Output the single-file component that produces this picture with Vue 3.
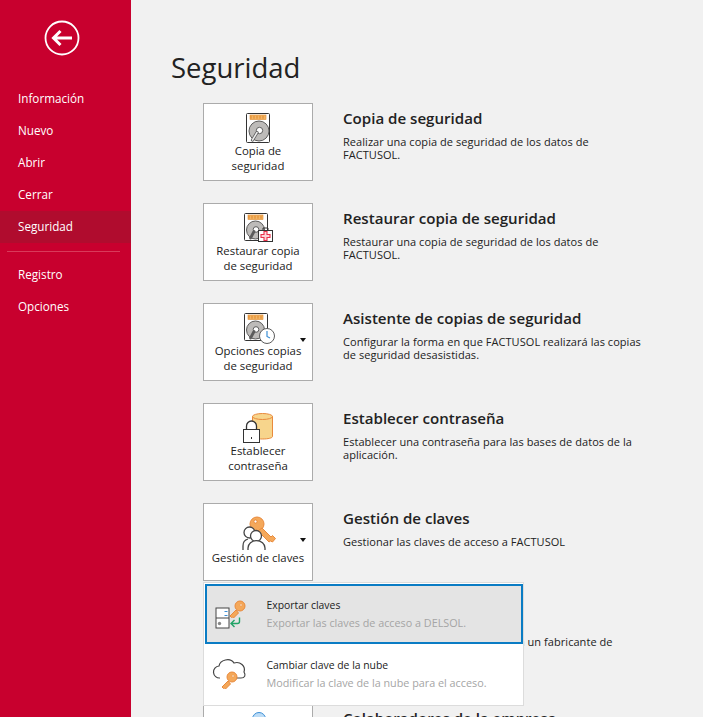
<template>
  <div class="page">
    <nav class="sidebar">
      <button class="back">
        <svg width="36" height="36" viewBox="0 0 36 36">
          <circle cx="18" cy="18" r="16.500" fill="none" stroke="#fff" stroke-width="1.800" />
          <path d="M9.500 18H28M16.500 11 9.500 18l7 7" fill="none" stroke="#fff" stroke-width="3" />
        </svg>
      </button>
      <a v-for="item in navTop" :key="item" class="nav-item" :class="{ active: item === 'Seguridad' }">{{ item }}</a>
      <div class="nav-sep"></div>
      <a v-for="item in navBottom" :key="item" class="nav-item">{{ item }}</a>
    </nav>

    <main class="content">
      <h1>Seguridad</h1>
      <section v-for="row in rows" :key="row.title" class="row">
        <div class="tile">
          <svg class="tile-icon" width="48" height="36" viewBox="0 0 48 36">
            <g v-if="row.icon === 'disk'">
              <rect x="12.500" y="2.500" width="23" height="29" rx="1" fill="#fff" stroke="#333" />
              <rect x="16" y="4" width="16" height="4.500" fill="#f4b565" stroke="#e08a2e" stroke-width=".6" />
              <path d="M16.500 6.200h15" stroke="#e08a2e" stroke-width="3" stroke-dasharray="1 2" />
              <circle cx="25" cy="20" r="10" fill="#bdbbb9" stroke="#5c5c5c" />
              <circle cx="25.500" cy="19.500" r="3.200" fill="#fff" stroke="#5c5c5c" />
              <path d="M23 21.500 18.500 29" stroke="#5c5c5c" stroke-width="3.200" stroke-linecap="round" />
              <path d="M23 21.500 18.500 29" stroke="#eee" stroke-width="1.500" stroke-linecap="round" />
            </g>
            <g v-else-if="row.icon === 'restore'">
              <rect x="10.500" y="2.500" width="23" height="27" rx="1" fill="#fff" stroke="#333" />
              <rect x="14" y="4" width="15" height="4.500" fill="#f4b565" stroke="#e08a2e" stroke-width=".6" />
              <path d="M14.500 6.200h14" stroke="#e08a2e" stroke-width="3" stroke-dasharray="1 2" />
              <circle cx="21.500" cy="19" r="9" fill="#bdbbb9" stroke="#5c5c5c" />
              <circle cx="22" cy="18.500" r="2.800" fill="#fff" stroke="#5c5c5c" />
              <path d="M20 20.500 16.500 27" stroke="#5c5c5c" stroke-width="2.800" stroke-linecap="round" />
              <path d="M29 19v-2h5v2" fill="none" stroke="#333" />
              <rect x="24.500" y="19.500" width="14" height="11" fill="#fff" stroke="#333" />
              <path d="M30 20.500h3v3h3v3h-3v3h-3v-3h-3v-3h3z" fill="#fbd3d8" stroke="#e9304a" stroke-width="1.100" />
            </g>
            <g v-else-if="row.icon === 'clock'">
              <rect x="10.500" y="2.500" width="23" height="27" rx="1" fill="#fff" stroke="#333" />
              <rect x="14" y="4" width="15" height="4.500" fill="#f4b565" stroke="#e08a2e" stroke-width=".6" />
              <path d="M14.500 6.200h14" stroke="#e08a2e" stroke-width="3" stroke-dasharray="1 2" />
              <circle cx="21.500" cy="19" r="9" fill="#bdbbb9" stroke="#5c5c5c" />
              <circle cx="22" cy="18.500" r="2.800" fill="#fff" stroke="#5c5c5c" />
              <path d="M20 20.500 16.500 27" stroke="#5c5c5c" stroke-width="2.800" stroke-linecap="round" />
              <circle cx="33" cy="25" r="7.500" fill="#fff" stroke="#5c5c5c" />
              <path d="M33 20v5.500l3 1.500" fill="none" stroke="#3c8fd6" stroke-width="1.200" />
            </g>
            <g v-else-if="row.icon === 'lock'">
              <path d="M18.500 5.500v20c0 1.500 4.500 2.500 10 2.500s10-1 10-2.500v-20z" fill="#f7d58c" stroke="#e98a3c" />
              <ellipse cx="28.500" cy="5.500" rx="10" ry="3" fill="#f7d58c" stroke="#e98a3c" />
              <path d="M12.500 18.500v-3.500a5 5 0 0 1 10 0v3.500" fill="#fff" stroke="#333" stroke-width="1.300" />
              <rect x="9.500" y="18.500" width="16" height="13" fill="#fff" stroke="#333" />
              <rect x="17" y="26" width="1" height="2" fill="#333" />
            </g>
            <g v-else-if="row.icon === 'keys'">
              <circle cx="23" cy="13" r="7" fill="#f4a85a" stroke="#e98a3c" />
              <circle cx="21.500" cy="10.500" r="1.600" fill="#fff" stroke="#e98a3c" />
              <path d="m28 17 9 9 1.500-1.500 3 3-3 3.500-2-1-1.500 1-11-11z" fill="#f4a85a" stroke="#e98a3c" />
              <circle cx="15.500" cy="21.500" r="5.500" fill="#fff" stroke="#444" stroke-width="1.300" />
              <path d="M9 39v-4a7 7 0 0 1 5-7" fill="none" stroke="#444" stroke-width="1.300" />
              <circle cx="22" cy="25" r="5.500" fill="#fff" stroke="#444" stroke-width="1.300" />
              <path d="M14 39v-2a8 7 0 0 1 17 0v2" fill="#fff" stroke="#444" stroke-width="1.300" />
            </g>
            <g v-else-if="row.icon === 'people'">
              <circle cx="25" cy="8" r="6.500" fill="#bcdcf6" stroke="#3c8fd6" />
            </g>
          </svg>
          <span class="tile-label" :class="{ single: row.icon === 'keys' }">{{ row.label }}</span>
          <span v-if="row.caret" class="caret"></span>
          <div v-if="row.menu" class="menu">
            <div v-for="entry in menuItems" :key="entry.title" class="menu-item" :class="{ selected: entry.selected }">
              <svg class="menu-icon" width="40" height="40" viewBox="0 0 40 40">
                <g v-if="entry.selected">
                  <g transform="translate(1.500 5.500)">
                    <rect x="1.500" y="8.500" width="13" height="20" fill="#fff" stroke="#444" />
                    <path d="M1.500 18.500h13" stroke="#444" />
                    <path d="M10 12h3M10 16h3" stroke="#3c8fd6" />
                    <circle cx="5" cy="24" r="1.700" fill="#888" />
                  </g>
                  <g transform="translate(0 6)">
                    <circle cx="27" cy="6" r="5" fill="#f4a85a" stroke="#e98a3c" />
                    <circle cx="28" cy="5" r="1" fill="#fff" stroke="#e98a3c" stroke-width=".5" />
                    <path d="m23 10-6 6 1.500 1.500 1-.5 1 1 5-5z" fill="#f4a85a" stroke="#e98a3c" />
                    <path d="M26.500 17.500v4a2 2 0 0 1-2 2h-6M21.500 20l-3.500 3.500 3.500 3.500" fill="none" stroke="#21a366" stroke-width="1.400" />
                  </g>
                </g>
                <g v-else>
                  <path transform="translate(0 -5)" d="M7 29a6 6 0 0 1-1-12c1-6 11-9 15-3 6-2 12 3 10 9 2 3 1 6-3 6h-8" fill="#fff" stroke="#444" stroke-width="1.200" />
                  <g transform="translate(-3 -6)">
                    <circle cx="22" cy="29" r="5" fill="#f4a85a" stroke="#e98a3c" />
                    <circle cx="23" cy="28" r="1" fill="#fff" stroke="#e98a3c" stroke-width=".5" />
                    <path d="m18 33-6 6 1.500 1.500 1-.5 1 1 5-5z" fill="#f4a85a" stroke="#e98a3c" />
                  </g>
                </g>
              </svg>
              <div class="menu-text">
                <div class="menu-title">{{ entry.title }}</div>
                <div class="menu-desc">{{ entry.desc }}</div>
              </div>
            </div>
          </div>
        </div>
        <div class="info">
          <h2>{{ row.title }}</h2>
          <p>{{ row.desc }}</p>
        </div>
      </section>
    </main>
  </div>
</template>

<script setup>
const navTop = ['Información', 'Nuevo', 'Abrir', 'Cerrar', 'Seguridad']
const navBottom = ['Registro', 'Opciones']

const rows = [
  { icon: 'disk', label: 'Copia de seguridad', title: 'Copia de seguridad', desc: 'Realizar una copia de seguridad de los datos de FACTUSOL.' },
  { icon: 'restore', label: 'Restaurar copia de seguridad', title: 'Restaurar copia de seguridad', desc: 'Restaurar una copia de seguridad de los datos de FACTUSOL.' },
  { icon: 'clock', label: 'Opciones copias de seguridad', title: 'Asistente de copias de seguridad', desc: 'Configurar la forma en que FACTUSOL realizará las copias de seguridad desasistidas.', caret: true },
  { icon: 'lock', label: 'Establecer contraseña', title: 'Establecer contraseña', desc: 'Establecer una contraseña para las bases de datos de la aplicación.' },
  { icon: 'keys', label: 'Gestión de claves', title: 'Gestión de claves', desc: 'Gestionar las claves de acceso a FACTUSOL', caret: true, menu: true },
  { icon: 'none', label: 'Fabricantes', title: 'Acceso de fabricantes', desc: 'Conceder el acceso de FACTUSOL a un fabricante de software.' },
  { icon: 'people', label: 'Colaboradores', title: 'Colaboradores de la empresa', desc: '' }
]

const menuItems = [
  { title: 'Exportar claves', desc: 'Exportar las claves de acceso a DELSOL.', selected: true },
  { title: 'Cambiar clave de la nube', desc: 'Modificar la clave de la nube para el acceso.' }
]
</script>

<style>
html, body {
  margin: 0;
  overflow: hidden;
}
</style>

<style scoped>
.page {
  display: flex;
  height: 717px;
  overflow: hidden;
  font-family: "Open Sans", "Noto Sans", sans-serif;
  color: #1a1a1a;
  background: #f1f1f1;
}

.sidebar {
  flex: 0 0 131px;
  background: #c8002e;
  color: #fff;
  font-size: 11.700px;
}

.back {
  display: block;
  width: 36px;
  height: 36px;
  margin: 20px 0 27px 44px;
  padding: 0;
  border: 0;
  background: none;
}

.nav-item {
  display: block;
  height: 32px;
  padding-left: 18px;
  line-height: 30px;
}

.nav-item.active {
  background: #b00c2e;
}

.nav-sep {
  height: 1px;
  margin: 8px 11px 7px 7px;
  background: #d93a5a;
}

.content {
  flex: 1;
  padding-left: 40px;
}

h1 {
  height: 103px;
  margin: 0;
  padding-top: 48px;
  box-sizing: border-box;
  font-size: 27.500px;
  line-height: 40px;
  font-weight: 400;
  color: #222;
}

.row {
  display: flex;
  height: 78px;
  margin: 0 0 22px 32px;
}

.tile {
  position: relative;
  flex: 0 0 110px;
  box-sizing: border-box;
  display: flex;
  flex-direction: column;
  align-items: center;
  padding-top: 7px;
  border: 1px solid #ababab;
  background: #fff;
}

.tile-icon {
  flex: none;
  display: block;
  overflow: visible;
}

.tile-label {
  margin-top: -4px;
  width: 94px;
  text-align: center;
  font-size: 11.400px;
  line-height: 15px;
  color: #222;
}

.tile-label.single {
  margin-top: 3px;
}

.caret {
  position: absolute;
  top: 34px;
  right: 6px;
  border-style: solid;
  border-width: 4px 3.500px 0;
  border-color: #111 transparent transparent;
}

.info {
  padding-left: 30px;
}

h2 {
  margin: 5px 0 7px;
  font-size: 15.100px;
  line-height: 20px;
  font-weight: 600;
  color: #222;
}

p {
  width: 302px;
  margin: 0;
  font-size: 11px;
  letter-spacing: .05px;
  line-height: 13px;
  color: #222;
}

.menu {
  position: absolute;
  z-index: 2;
  top: 78px;
  left: -1px;
  box-sizing: border-box;
  width: 321px;
  height: 124px;
  padding: 1px 0 0 1px;
  border: 1px solid #dcdcdc;
  background: #fff;
}

.menu-item {
  box-sizing: border-box;
  display: flex;
  height: 60px;
  padding: 8px 0 0 6px;
  border: 2px solid transparent;
}

.menu-item.selected {
  border-color: #0a7cc4;
  background: #e4e4e4;
}

.menu-icon {
  flex: none;
  overflow: visible;
}

.menu-text {
  padding: 3px 0 0 13.500px;
}

.menu-title {
  font-size: 10.400px;
  line-height: 16px;
  font-weight: 500;
  color: #222;
}

.menu-desc {
  margin-top: 2px;
  font-size: 10.800px;
  line-height: 16px;
  color: #a5a5a5;
}
</style>
